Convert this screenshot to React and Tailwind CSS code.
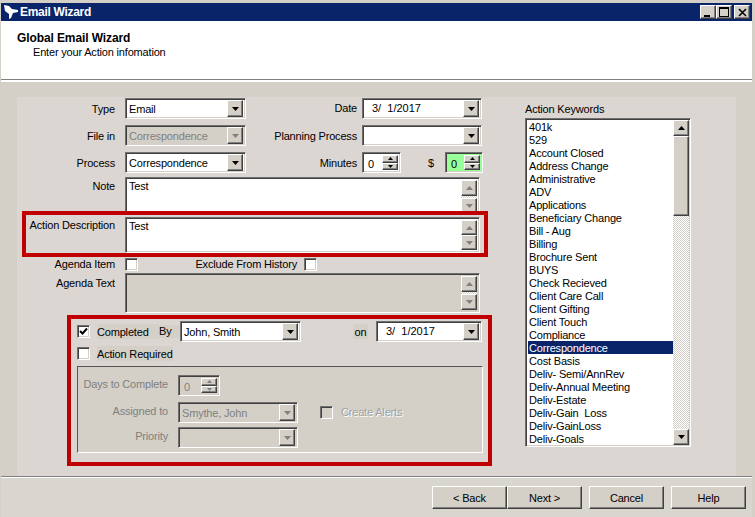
// App.jsx - Email Wizard dialog
const SUNKEN =
  "border border-t-[#707070] border-l-[#707070] border-b-white border-r-white shadow-[inset_1px_1px_0_#404040,inset_-1px_-1px_0_#d4d0c8]";
const RAISED =
  "border border-t-white border-l-white border-b-[#404040] border-r-[#404040] bg-[#d4d0c8] shadow-[inset_-1px_-1px_0_#808080]";
const DITHER =
  "bg-[repeating-conic-gradient(#d4d0c8_0_25%,#ffffff_0_50%)] bg-size-[2px_2px]";

const keywords = [
  "401k", "529", "Account Closed", "Address Change", "Administrative", "ADV", "Applications",
  "Beneficiary Change", "Bill - Aug", "Billing", "Brochure Sent", "BUYS", "Check Recieved",
  "Client Care Call", "Client Gifting", "Client Touch", "Compliance", "Correspondence",
  "Cost Basis", "Deliv- Semi/AnnRev", "Deliv-Annual Meeting", "Deliv-Estate", "Deliv-Gain  Loss",
  "Deliv-GainLoss", "Deliv-Goals",
];

function Arrow({ up, disabled, small }) {
  const w = small ? 5 : 7;
  const h = small ? 3 : 4;
  const points = up ? `${w / 2},0 ${w},${h} 0,${h}` : `0,0 ${w},0 ${w / 2},${h}`;
  return (
    <svg width={w} height={h} viewBox={`0 0 ${w} ${h}`} className="block">
      <polygon points={points} fill={disabled ? "#808080" : "#000000"} />
    </svg>
  );
}

function Select({ value, width, disabled, date }) {
  return (
    <div
      className={`${SUNKEN} flex h-[21px] shrink-0 items-center p-[2px] ${disabled ? "bg-[#d4d0c8] text-[#808080]" : "bg-white text-black"}`}
      style={{ width }}
    >
      <span className={`flex-1 whitespace-pre ${date ? "pl-[7px] tracking-normal" : "pl-px pt-[2px]"}`}>{value}</span>
      <div className={`${RAISED} flex h-[17px] w-[16px] items-center justify-center`}>
        <Arrow disabled={disabled} />
      </div>
    </div>
  );
}

function Spin({ value, width, green, disabled }) {
  return (
    <div
      className={`${SUNKEN} flex h-[21px] shrink-0 items-stretch p-[2px] ${green ? "bg-[#99ff99]" : disabled ? "bg-[#d4d0c8]" : "bg-white"} ${disabled ? "text-[#808080]" : "text-black"}`}
      style={{ width }}
    >
      <span className="flex-1 pl-[3px] leading-[19px]">{value}</span>
      <div className="flex w-[16px] flex-col">
        <div className={`${RAISED} flex h-[9px] items-center justify-center`}>
          <Arrow up small disabled={disabled} />
        </div>
        <div className={`${RAISED} flex h-[8px] items-center justify-center`}>
          <Arrow small disabled={disabled} />
        </div>
      </div>
    </div>
  );
}

function TextBox({ value, height, disabled }) {
  return (
    <div
      className={`${SUNKEN} flex w-[355px] p-[2px] ${disabled ? "bg-[#d4d0c8]" : "bg-white"}`}
      style={{ height }}
    >
      <span className="flex-1 pl-px">{value}</span>
      <div className="flex w-[16px] flex-col">
        <div className={`${RAISED} flex h-[16px] items-center justify-center`}>
          <Arrow up disabled />
        </div>
        <div className={`${DITHER} flex-1`} />
        <div className={`${RAISED} flex h-[16px] items-center justify-center`}>
          <Arrow disabled />
        </div>
      </div>
    </div>
  );
}

function Check({ checked, disabled }) {
  return (
    <div
      className={`${SUNKEN} flex h-[13px] w-[13px] shrink-0 items-center justify-center ${disabled ? "bg-[#d4d0c8]" : "bg-white"}`}
    >
      {checked && (
        <svg width="9" height="9" viewBox="0 0 9 9" className="block">
          <path d="M1 4 L3.5 6.5 L8 1.5" fill="none" stroke="#000" strokeWidth="2" />
        </svg>
      )}
    </div>
  );
}

function Label({ children, width, className = "" }) {
  return (
    <span className={`shrink-0 text-right ${className}`} style={{ width }}>
      {children}
    </span>
  );
}

function WinButton({ children, className = "" }) {
  return (
    <div className={`${RAISED} flex h-[14px] w-[16px] items-center justify-center ${className}`}>
      {children}
    </div>
  );
}

function TitleBar() {
  return (
    <div className="flex h-[18px] items-center bg-[#0a246a] pr-[2px]">
      <svg width="18" height="18" viewBox="0 0 18 18" className="ml-px shrink-0">
        <path d="M2 2 L7 3 L10 6 L16 7 L16 9 L11 10 L9 15 L7 16 L7 11 L3 8 Z" fill="#ffffff" />
      </svg>
      <span className="flex-1 text-[12px] font-bold tracking-[-0.3px] text-white">Email Wizard</span>
      <WinButton>
        <div className="mt-[7px] mr-[2px] h-[2px] w-[6px] bg-black" />
      </WinButton>
      <WinButton>
        <div className="h-[10px] w-[10px] border border-t-2 border-black" />
      </WinButton>
      <WinButton className="ml-[2px]">
        <svg width="9" height="9" viewBox="0 0 9 9" className="block">
          <path d="M1 1 L8 8 M8 1 L1 8" stroke="#000" strokeWidth="1.6" />
        </svg>
      </WinButton>
    </div>
  );
}

function KeywordList() {
  return (
    <div className={`${SUNKEN} flex h-[329px] w-[166px] bg-white py-px pl-[2px] pr-px`}>
      <ul className="flex-1">
        {keywords.map((word) => (
          <li
            key={word}
            className={`h-[13px] whitespace-pre pl-px leading-[15px] ${word === "Correspondence" ? "bg-[#0a246a] text-white" : "text-black"}`}
          >
            {word}
          </li>
        ))}
      </ul>
      <div className={`${DITHER} flex w-[16px] flex-col`}>
        <div className={`${RAISED} flex h-[16px] shrink-0 items-center justify-center`}>
          <Arrow up />
        </div>
        <div className={`${RAISED} h-[80px] shrink-0`} />
        <div className="flex-1" />
        <div className={`${RAISED} flex h-[16px] shrink-0 items-center justify-center`}>
          <Arrow />
        </div>
      </div>
    </div>
  );
}

function CompletedBox() {
  return (
    <div className="ml-[50px] mt-[2px] h-[151px] w-[425px] border-4 border-[#c00000] px-[6px] pt-[2px]">
      <div className="flex h-[21px] items-center">
        <Check checked />
        <span className="ml-[7px] w-[62px] bg-[#d4d0c8] pt-[2px]">Completed</span>
        <span className="w-[21px] bg-[#d4d0c8]">By</span>
        <Select value="John, Smith" width={121} />
        <span className="ml-[52px] w-[15px] bg-[#d4d0c8] pt-[2px] text-center">on</span>
        <div className="ml-[8px]">
          <Select value="3/  1/2017" width={106} date />
        </div>
      </div>
      <div className="mt-[5px] flex h-[13px] items-center">
        <Check />
        <span className="ml-[7px] bg-[#d4d0c8] pt-[2px]">Action Required</span>
      </div>
      <div className="mt-[6px] h-[87px] w-[406px] border border-t-[#555555] border-l-[#555555] border-b-white border-r-white bg-[#d4d0c8] pt-[8px] text-[#808080]">
        <div className="flex h-[21px] items-center">
          <Label width={90} className="pb-[2px]">Days to Complete</Label>
          <div className="ml-[10px]">
            <Spin value="0" width={42} disabled />
          </div>
        </div>
        <div className="mt-[6px] flex h-[21px] items-center">
          <Label width={90} className="pb-[2px]">Assigned to</Label>
          <div className="ml-[10px]">
            <Select value="Smythe, John" width={120} disabled />
          </div>
          <div className="ml-[22px]">
            <Check disabled />
          </div>
          <span className="ml-[8px] text-[#a0a0a0] [text-shadow:1px_1px_0_#ffffff]">Create Alerts</span>
        </div>
        <div className="mt-[4px] flex h-[21px] items-center">
          <Label width={90} className="pb-[2px]">Priority</Label>
          <div className="ml-[10px]">
            <Select value="" width={120} disabled />
          </div>
        </div>
      </div>
    </div>
  );
}

function ActionForm() {
  return (
    <div className="w-[508px] shrink-0 pt-px">
      <div className="flex h-[21px] items-center">
        <Label width={98} className="pt-[2px]">Type</Label>
        <div className="ml-[10px]">
          <Select value="Email" width={121} />
        </div>
        <Label width={111}>Date</Label>
        <div className="ml-[5px]">
          <Select value="3/  1/2017" width={120} date />
        </div>
      </div>
      <div className="mt-[6px] flex h-[21px] items-center">
        <Label width={98} className="pt-[2px]">File in</Label>
        <div className="ml-[10px]">
          <Select value="Correspondence" width={121} disabled />
        </div>
        <Label width={111} className="pt-[2px]">Planning Process</Label>
        <div className="ml-[5px]">
          <Select value="" width={120} />
        </div>
      </div>
      <div className="mt-[6px] flex h-[21px] items-center">
        <Label width={98} className="pt-[2px]">Process</Label>
        <div className="ml-[10px]">
          <Select value="Correspondence" width={121} />
        </div>
        <Label width={111} className="pt-[2px]">Minutes</Label>
        <div className="ml-[5px]">
          <Spin value="0" width={39} />
        </div>
        <span className="ml-[27px] w-[17px] pt-[2px]">$</span>
        <Spin value="0" width={38} green />
      </div>
      <div className="mt-[4px] flex h-[34px]">
        <Label width={98} className="pt-[3px]">Note</Label>
        <div className="ml-[10px]">
          <TextBox value="Test" height={40} />
        </div>
      </div>
      <div className="relative ml-[5px] flex h-[46px] w-[466px] border-4 border-[#c00000] bg-[#dcd6d2] pt-[2px]">
        <Label width={89} className="pt-[2px]">Action Description</Label>
        <div className="ml-[10px]">
          <TextBox value="Test" height={36} />
        </div>
      </div>
      <div className="mt-px flex h-[13px] items-center">
        <Label width={98}>Agenda Item</Label>
        <div className="ml-[10px]">
          <Check />
        </div>
        <Label width={159}>Exclude From History</Label>
        <div className="ml-[7px]">
          <Check />
        </div>
      </div>
      <div className="mt-[2px] flex">
        <Label width={98} className="pt-[4px]">Agenda Text</Label>
        <div className="ml-[10px]">
          <TextBox value="" height={40} disabled />
        </div>
      </div>
      <CompletedBox />
    </div>
  );
}

function FooterButton({ children, className = "" }) {
  return (
    <div className={`${RAISED} flex h-[23px] w-[75px] items-center justify-center pt-px ${className}`}>
      {children}
    </div>
  );
}

export default function App() {
  return (
    <div className="flex h-[517px] w-[755px] flex-col overflow-hidden bg-[#d4d0c8] pl-px pr-[3px] pt-[3px] font-['Liberation_Sans',sans-serif] text-[11px] leading-[13px] tracking-[-0.18px] text-black">
      <TitleBar />

      <div className="h-[61px] border-b-2 border-b-white bg-white pl-[16px] pt-[10px] shadow-[inset_0_-1px_0_#808080]">
        <div className="text-[12px] font-bold leading-[14px] tracking-[-0.1px]">Global Email Wizard</div>
        <div className="pl-[16px] leading-[14px]">Enter your Action infomation</div>
      </div>

      <div className="mt-[15px] ml-[16px] flex h-[379px] w-[719px] bg-[#dcd6d2]">
        <ActionForm />
        <div className="pt-[6px]">
          <div className="mb-[2px] h-[13px]">Action Keywords</div>
          <KeywordList />
        </div>
      </div>

      <div className="flex-1 border-t border-t-[#808080] bg-[#d9d5cf] pt-[9px] pr-[6px] shadow-[inset_0_1px_0_#ffffff]">
        <div className="flex justify-end">
          <FooterButton>&lt; Back</FooterButton>
          <FooterButton>Next &gt;</FooterButton>
          <FooterButton className="ml-[7px]">Cancel</FooterButton>
          <FooterButton className="ml-[7px]">Help</FooterButton>
        </div>
      </div>
    </div>
  );
}
